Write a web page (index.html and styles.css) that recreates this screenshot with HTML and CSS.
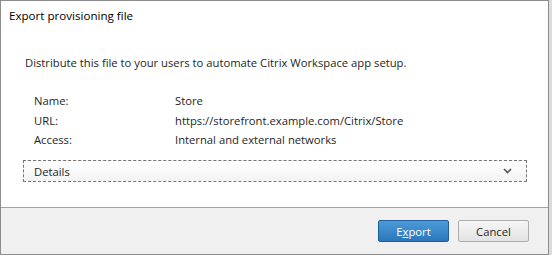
FILE: index.html
```html
<!DOCTYPE html>
<html>
<head>
<meta charset="utf-8">
<link rel="stylesheet" href="styles.css">
</head>
<body>
<div class="dialog">
  <div class="title">Export provisioning file</div>
  <div class="content">
    <p class="intro">Distribute this file to your users to automate Citrix Workspace app setup.</p>
    <div class="info">
      <div class="label">Name:</div><div class="value">Store</div>
      <div class="label">URL:</div><div class="value">https://storefront.example.com/Citrix/Store</div>
      <div class="label">Access:</div><div class="value">Internal and external networks</div>
    </div>
    <div class="details">
      <span>Details</span>
      <svg class="chev" width="9" height="6" viewBox="0 0 9 6"><path d="M1 1 L4.5 4.5 L8 1" fill="none" stroke="#555" stroke-width="1.6"/></svg>
    </div>
  </div>
  <div class="footer">
    <button class="btn primary">E<span class="ul">x</span>port</button>
    <button class="btn">Cancel</button>
  </div>
</div>
</body>
</html>
```
FILE: styles.css
```css
html, body { margin: 0; padding: 0; }
body {
  background: #dcdcdc;
  font-family: "Open Sans", "Noto Sans", sans-serif;
  font-size: 11.25px;
  color: #1e1e1e;
  width: 552px;
  height: 255px;
  overflow: hidden;
}
.dialog {
  width: 547px;
  height: 253px;
  border: 1px solid #8c8c8c;
  background: #ffffff;
  display: flex;
  flex-direction: column;
}
.title {
  height: 30px;
  line-height: 30px;
  padding-left: 8px;
  font-size: 11.6px;
  color: #000;
}
.content {
  flex: 1;
  padding: 0 21px 0 22px;
}
.intro {
  margin: 24px 0 0 2px;
  line-height: 16px;
}
.info {
  display: grid;
  grid-template-columns: 141px 1fr;
  margin: 22px 0 0 11px;
  row-gap: 3.5px;
  line-height: 16px;
}
.details {
  margin-top: 12px;
  height: 20px;
  border: 1px dashed #777;
  background: linear-gradient(#ffffff, #f3f3f3);
  display: flex;
  align-items: center;
  justify-content: space-between;
  padding: 0 14px 0 10px;
}
.footer {
  height: 46px;
  border-top: 1px solid #a3a3a3;
  background: #f0f0f0;
  display: flex;
  align-items: center;
  justify-content: flex-end;
  padding-right: 19px;
  gap: 9px;
}
.btn {
  width: 71px;
  height: 22px;
  font-family: inherit;
  font-size: 11.25px;
  border: 1px solid #adadad;
  border-radius: 2px;
  background: linear-gradient(#f6f6f6, #e2e2e2);
  color: #1e1e1e;
  padding: 0;
}
.btn.primary {
  background: linear-gradient(#4c9ad8, #2a78bc);
  border-color: #1f5f96;
  color: #ffffff;
}
.ul { text-decoration: underline; }
```
